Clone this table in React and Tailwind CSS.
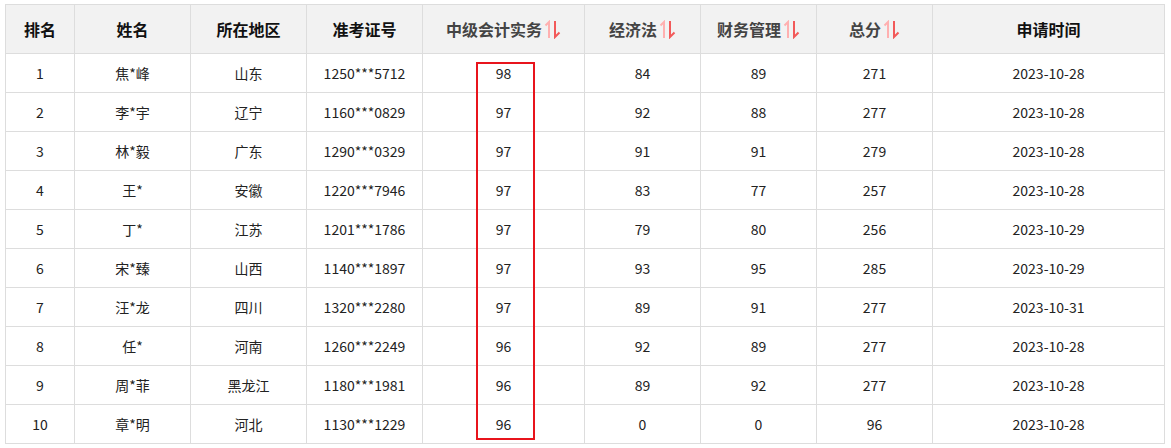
import React from "react";

const rows = [
  ["1", "焦*峰", "山东", "1250***5712", "98", "84", "89", "271", "2023-10-28"],
  ["2", "李*宇", "辽宁", "1160***0829", "97", "92", "88", "277", "2023-10-28"],
  ["3", "林*毅", "广东", "1290***0329", "97", "91", "91", "279", "2023-10-28"],
  ["4", "王*", "安徽", "1220***7946", "97", "83", "77", "257", "2023-10-28"],
  ["5", "丁*", "江苏", "1201***1786", "97", "79", "80", "256", "2023-10-29"],
  ["6", "宋*臻", "山西", "1140***1897", "97", "93", "95", "285", "2023-10-29"],
  ["7", "汪*龙", "四川", "1320***2280", "97", "89", "91", "277", "2023-10-31"],
  ["8", "任*", "河南", "1260***2249", "96", "92", "89", "277", "2023-10-28"],
  ["9", "周*菲", "黑龙江", "1180***1981", "96", "89", "92", "277", "2023-10-28"],
  ["10", "章*明", "河北", "1130***1229", "96", "0", "0", "96", "2023-10-28"],
];

// 列定义：标题、宽度、是否可排序
const cols = [
  { title: "排名", w: "w-[69px]" },
  { title: "姓名", w: "w-[116px]" },
  { title: "所在地区", w: "w-[116px]" },
  { title: "准考证号", w: "w-[116px]" },
  { title: "中级会计实务", w: "w-[162px]", sort: true },
  { title: "经济法", w: "w-[116px]", sort: true },
  { title: "财务管理", w: "w-[116px]", sort: true },
  { title: "总分", w: "w-[116px]", sort: true },
  { title: "申请时间", w: "w-[232px]" },
];

function SortIcon() {
  return (
    <svg width="17" height="19" viewBox="0 0 17 19" className="ml-[2px] inline-block">
      <path d="M5 18V2L1.5 5.5" fill="none" stroke="#ffb0b0" strokeWidth="2" />
      <path d="M11 1v16l4.5-4.5" fill="none" stroke="#f25a5a" strokeWidth="2" />
    </svg>
  );
}

export default function App() {
  return (
    <div className="min-h-screen bg-white font-['Microsoft_YaHei','Noto_Sans_CJK_SC',sans-serif]">
      <div className="relative pl-[5px] pt-[4px]">
        <table className="table-fixed border-collapse text-center">
          <thead>
            <tr className="h-[49px] bg-[#f2f2f2]">
              {cols.map((c) => (
                <th
                  key={c.title}
                  className={`${c.w} border border-[#dddddd] p-0 text-[16px] font-bold ${
                    c.sort ? "text-[#444]" : "text-[#111]"
                  }`}
                >
                  <span className="inline-flex items-center">
                    {c.title}
                    {c.sort && <SortIcon />}
                  </span>
                </th>
              ))}
            </tr>
          </thead>
          <tbody>
            {rows.map((r) => (
              <tr key={r[0]} className="h-[39px]">
                {r.map((v, i) => (
                  <td key={i} className="border border-[#dddddd] p-0 text-[14px] text-[#222]">
                    {v}
                  </td>
                ))}
              </tr>
            ))}
          </tbody>
        </table>
        {/* 红框高亮 中级会计实务 列 */}
        <div className="pointer-events-none absolute left-[476px] top-[62px] h-[378px] w-[59px] border-2 border-[#e8141c]" />
      </div>
    </div>
  );
}
